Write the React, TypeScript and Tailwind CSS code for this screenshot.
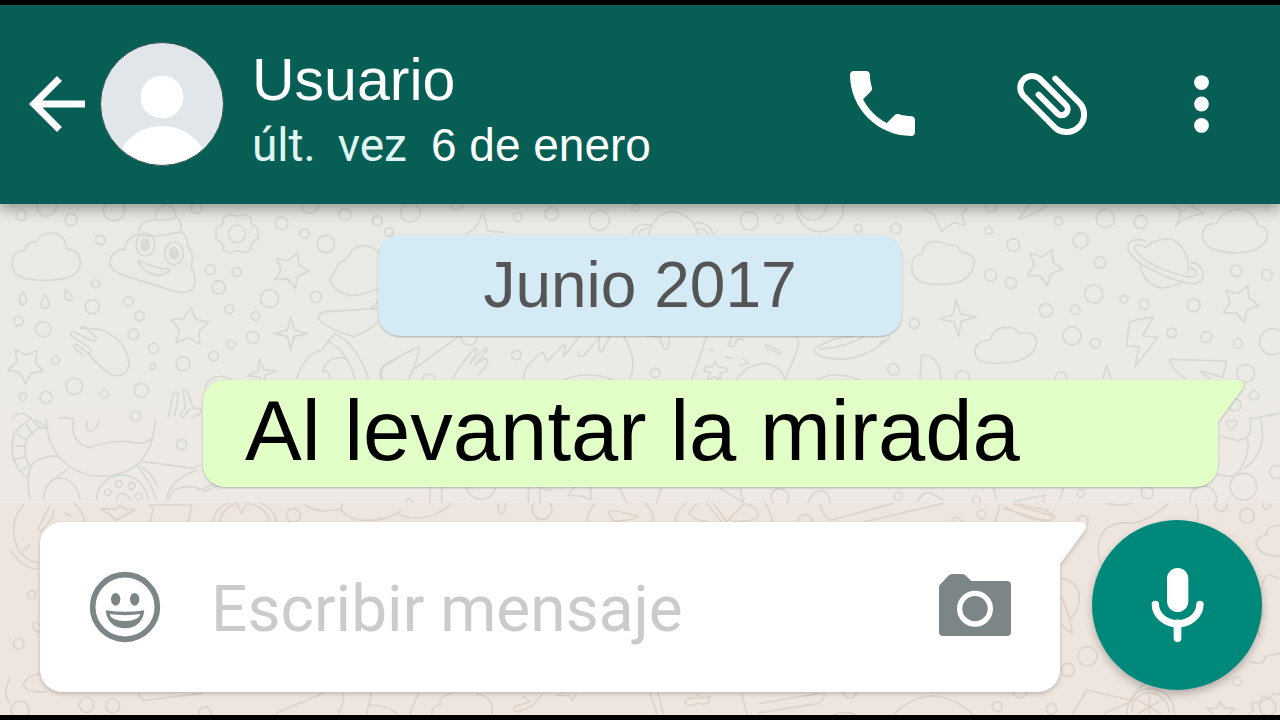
type Dot = [number, number, number];

function Dots({ items }: { items: Dot[] }) {
  return (
    <>
      {items.map(([x, y, r]) => (
        <circle key={`${x}-${y}`} cx={x} cy={y} r={r} />
      ))}
    </>
  );
}

function Star({ x, y, r, turn = 0, points = 5, inner = 0.52 }: { x: number; y: number; r: number; turn?: number; points?: number; inner?: number }) {
  const d = Array.from({ length: points * 2 }, (_, i) => {
    const a = (Math.PI * i) / points - Math.PI / 2 + (turn * Math.PI) / 180;
    const q = i % 2 ? r * inner : r;
    return `${i ? "L" : "M"}${(x + q * Math.cos(a)).toFixed(1)} ${(y + q * Math.sin(a)).toFixed(1)}`;
  }).join("");
  return <path d={`${d}Z`} />;
}

function Wallpaper() {
  return (
    <svg
      className="absolute inset-0 h-full w-full"
      viewBox="0 204 1280 511"
      preserveAspectRatio="xMidYMin slice"
      fill="none"
      strokeWidth="5"
      strokeLinecap="round"
      strokeLinejoin="round"
      aria-hidden="true"
    >
      <defs>
        <linearGradient id="paper" x1="0" y1="0" x2="0" y2="1">
          <stop offset="0" stopColor="#e9eae5" />
          <stop offset="0.45" stopColor="#ebeae5" />
          <stop offset="1" stopColor="#eee9e5" />
        </linearGradient>
        <clipPath id="upper">
          <rect x="0" y="204" width="1280" height="299" />
        </clipPath>
        <clipPath id="lower">
          <rect x="0" y="503" width="1280" height="212" />
        </clipPath>
      </defs>
      <rect x="0" y="204" width="1280" height="300" fill="url(#paper)" />
      <rect x="0" y="503" width="1280" height="212" fill="#eee5de" />
      <g clipPath="url(#upper)" stroke="#d8d8d3">
        <g transform="translate(0 200) scale(0.33333)">
          <path d="M36 195Q34 155 75 150Q80 125 108 125Q125 98 160 99Q195 102 200 146Q240 150 241 185Q240 225 195 235Q130 247 75 235Q38 225 36 195Z" />
          <path d="M375 148Q378 110 415 105Q415 62 465 60Q465 25 500 12Q525 25 530 52Q550 65 542 95Q565 105 562 138Q585 160 573 203Q590 225 582 262Q565 285 525 274L370 226Q325 210 330 180Q340 148 375 148Z" />
          <path d="M415 105Q460 115 542 95M465 60Q500 65 530 52M415 180Q460 205 508 208Q505 225 475 226Q425 220 415 180Z" />
          <ellipse cx="436" cy="134" rx="28" ry="34" />
          <ellipse cx="436" cy="134" rx="12" ry="17" fill="#dbdbd6" />
          <ellipse cx="522" cy="160" rx="28" ry="34" />
          <ellipse cx="522" cy="160" rx="12" ry="17" fill="#dbdbd6" />
          <path d="M690 42Q710 54 733 42L752 54Q748 76 774 82V118Q750 122 754 148L735 160Q712 145 690 160L668 150Q672 126 648 118V84Q674 78 668 54Z" />
          <circle cx="711" cy="101" r="26" />
          <Star x={872} y={210} r={55} turn={22} />
          <Star x={568} y={382} r={60} turn={4} />
          <Star x={78} y={495} r={56} turn={38} />
          <Star x={872} y={400} r={50} points={4} inner={0.28} />
          <Star x={785} y={520} r={45} turn={-10} points={4} inner={0.28} />
          <path d="M68 275Q48 310 68 314Q90 308 68 275ZM134 284Q112 322 135 326Q160 318 134 284ZM196 268Q190 300 208 302Q230 295 196 268Z" />
          <path d="M242 385L300 388Q375 415 387 485Q390 525 345 528Q315 520 262 458M242 385Q245 375 258 383L288 412Q292 425 275 423L222 395Q205 392 215 408L270 445Q278 460 262 458L232 434Q218 432 224 445L250 465" />
          <path d="M1134 155Q1090 120 1055 152Q1040 185 1018 188Q1005 218 992 235Q990 270 1050 287Q1095 285 1134 265M1134 325L980 335Q950 340 957 360Q990 390 1060 410Q1105 395 1134 365M1134 305L1115 325M1005 400L965 450Q915 460 890 535M985 425Q1040 450 1065 535M1005 402Q1070 430 1105 535M1035 475Q980 465 968 515Q985 505 990 535M1200 470L1150 500Q1140 510 1148 540" />
          <path d="M505 650L520 580Q530 570 535 585L525 645M548 572Q556 565 562 575L580 625Q610 620 602 640L575 655M550 580L556 625Q530 650 550 652L570 625M615 570Q620 530 665 528Q700 535 705 560" />
          <path d="M38 655Q60 625 93 655Q70 670 45 695Q25 745 50 800Q65 825 84 832M93 655L122 685L138 682M78 672L98 702M52 700L82 724M35 738H75M38 780L78 770M60 815L88 795M122 685Q75 700 75 750Q75 780 90 795M108 660L135 680M180 655Q200 650 220 658" />
          <path d="M138 660Q145 790 265 825Q350 840 410 795Q460 750 466 660M220 660Q210 730 270 743Q350 715 400 728Q435 735 460 712M262 665Q255 692 275 693Q290 690 296 662" />
          <path d="M90 900Q75 820 100 788Q140 765 170 768M130 900Q135 835 182 834Q230 840 240 900M170 830L200 810M410 795Q450 840 470 900M430 785L580 805L600 795M425 800Q450 815 475 860M500 895Q510 840 590 810M595 870L650 850M610 875L660 855M290 900Q290 840 360 825Q430 825 445 900M348 900Q365 860 392 900M605 870Q570 850 520 870L505 900" />
          <Dots items={[[64,46,16],[140,20,29],[213,59,18],[342,30,32],[301,120,14],[589,24,16],[845,70,19],[914,100,14],[930,15,25],[1035,44,18],[978,132,26],[1133,62,14],[1167,96,13],[631,209,15],[710,216,13],[656,262,20],[809,296,27],[948,291,17],[688,328,13],[767,348,13],[758,412,18],[693,433,13],[641,468,14],[549,491,21],[461,445,15],[458,499,9],[400,403,16],[419,348,14],[386,304,14],[287,251,12],[277,321,21],[55,363,14],[130,388,23],[167,481,12],[223,559,25],[313,581,12],[138,592,18],[69,590,11],[424,571,21],[406,648,15],[545,734,15],[356,852,10],[395,858,10],[323,877,10],[416,889,10]]} />
        </g>
        <g transform="translate(370 200) scale(0.33333)">
          <path d="M285 102Q325 90 335 40Q345 40 352 92L405 98M835 104Q850 40 910 34Q970 45 985 104M845 76Q800 65 785 104M835 85Q812 85 805 104M975 70Q1010 60 1033 104M985 85Q1005 85 1015 104" />
          <path d="M270 406L128 510L115 540M145 440L50 490Q20 510 35 540M145 440Q150 460 128 510M250 535Q260 510 310 450Q325 435 318 460L300 490L345 445Q360 440 345 460L315 495L345 475Q360 475 345 500L325 525M460 535Q465 490 520 455L530 485L580 435Q590 430 580 470L630 408M625 455Q620 475 645 465L690 408Q680 450 695 455L720 408M760 408Q805 480 780 535M580 540Q650 510 730 540M830 408L870 410L880 445Q895 460 898 410" />
          <path d="M1010 410L965 540M1280 410Q1292 425 1280 455L1245 540M1100 540Q1130 490 1190 490Q1235 500 1245 540M1018 448L1030 454M1065 470L1085 474M1120 475L1135 490L1110 495M1085 410L1075 438L1090 440L1105 415L1120 420M1190 435L1230 452Q1240 465 1225 460L1190 445Q1180 435 1190 435Z" />
          <path d="M1035 485L1045 500L1070 505V515L1050 520L1052 540L1035 530L1012 540L1022 518L1002 512L1005 500H1028ZM1330 448Q1390 408 1450 410M1350 448Q1430 440 1480 410M1330 448Q1335 475 1420 478Q1500 470 1560 410M1340 540Q1390 510 1470 540" />
          <Dots items={[[22,62,15],[121,37,29],[260,12,18],[443,51,13],[545,42,20],[688,61,30],[796,24,10],[1138,63,27],[1225,56,13],[1465,85,12],[1350,25,70],[1328,18,42],[56,96,12],[298,410,25],[439,465,14],[856,519,14],[176,542,20]]} />
        </g>
        <g transform="translate(880 200) scale(0.33333)">
          <path d="M95 205Q95 165 125 162Q130 125 165 124Q190 125 205 136Q235 130 243 157Q285 160 283 190Q275 235 230 248Q170 260 130 248Q95 235 95 205ZM285 458Q280 425 330 420Q340 382 385 382Q410 385 418 402Q465 390 470 425Q468 465 415 482Q360 495 310 486Q285 478 285 458ZM968 105Q970 70 1010 70Q1030 30 1080 27Q1125 35 1132 75Q1165 80 1163 110Q1150 150 1085 158Q1010 160 982 138Q968 125 968 105Z" />
          <path d="M133 27L163 45L185 94L220 68L255 75L245 45L262 22M415 58L450 15M415 58Q460 45 500 18M880 18L905 35L885 83Q905 50 972 40L935 18" />
          <path d="M795 142Q835 110 880 120Q930 150 925 218M780 195Q795 260 850 264Q885 260 908 244M795 122Q745 110 743 145Q755 190 880 238Q965 270 970 225Q965 190 935 188M795 142Q765 125 763 145Q785 190 890 222Q945 240 950 220Q945 205 930 202" />
          <path d="M748 365L820 350L788 408L833 412L765 500L777 440L740 438ZM870 478L1040 483L1028 532M868 480Q875 505 915 536M962 513L1028 532M962 513L990 536M1110 657L1200 640M1110 657Q1115 700 1100 715Q1115 750 1080 810L1060 830L1015 825M1142 660Q1165 750 1095 805M1020 708L1075 722L1100 712M120 535L125 465Q180 465 182 535M668 535L680 497L692 535M10 420L0 430M1040 675Q1035 655 1055 665Q1072 655 1072 670L1055 690Z" />
          <path d="M110 905Q130 875 150 878L190 900M340 865L350 900M550 865L540 900M400 905L495 885L490 905" />
          <Star x={492} y={200} r={57} turn={26} />
          <Star x={1080} y={310} r={58} turn={24} />
          <Star x={232} y={354} r={55} turn={-4} points={4} inner={0.28} />
          <Dots items={[[48,86,16],[333,22,15],[326,92,11],[400,135,19],[602,122,23],[536,63,12],[676,56,27],[782,66,20],[660,187,17],[332,225,18],[393,249,17],[641,282,27],[732,298,12],[793,313,15],[941,316,19],[1069,212,17],[1161,225,16],[586,329,14],[498,331,20],[576,407,27],[646,430,15],[875,399,14],[979,411,16],[1074,430,14],[1178,425,39],[1097,520,27],[1122,586,14],[1065,615,18],[1188,816,20],[1090,860,40],[970,898,40],[802,878,18],[603,880,11],[54,889,12],[289,900,12],[103,370,15],[40,508,17],[247,533,21],[543,533,17]]} />
        </g>
        <g transform="translate(400 480) scale(0.33333)">
          <path d="M90 20V68M125 20V68M15 68Q25 45 40 68M385 20V68M420 20V68M505 45L525 20M505 45L550 50L575 60L570 20M660 25Q670 50 680 68M785 25L770 68M960 25L1030 68L1020 25M1120 68Q1100 35 1140 25Q1180 40 1160 72M430 20Q430 35 455 30M200 20Q205 55 245 58Q280 55 285 25M1225 68Q1240 30 1265 32Q1290 40 1290 68" />
        </g>
      </g>
      <g clipPath="url(#lower)" stroke="#ddd3cb">
        <g transform="translate(0 480) scale(0.33333)">
          <path d="M70 75Q30 120 45 185Q65 240 115 248M35 215Q65 265 115 268M148 80L115 145L122 155L160 110V88M225 70Q250 100 255 125M300 85L350 88Q360 70 370 85L405 90L375 105L350 120L330 105ZM450 75L460 85L450 125M575 75L565 125M450 75H575M640 125Q645 80 690 68M660 125Q665 85 710 70L725 100L740 70Q800 80 808 125M780 70Q825 85 828 125M70 210L88 195M195 100L215 110M915 75Q960 105 1025 85Q1030 110 1080 120Q1150 125 1200 95M1030 70Q1020 80 1025 95" />
          <path d="M118 435Q95 415 100 440Q102 455 118 455M118 580Q75 590 70 615Q80 640 140 635M30 595Q5 640 30 670M415 640L430 662L605 640M970 640L830 698M1030 640Q1035 670 1015 700M1115 640L1100 700M1105 675Q1160 675 1190 700" />
          <Dots items={[[880,106,21],[95,344,12],[56,491,16],[260,675,22],[338,678,21],[60,690,27],[615,700,19]]} />
        </g>
        <g transform="translate(400 480) scale(0.33333)">
          <path d="M0 105Q80 135 155 70M295 70V95Q305 110 312 95L318 70M560 125Q565 90 585 70M735 70Q760 90 760 125M625 95Q630 85 715 110Q710 118 640 125ZM825 125Q830 90 860 70M895 70Q865 90 870 105Q885 120 925 125M920 70L965 125M940 70L980 125L1035 70M1000 125Q1080 125 1075 100Q1065 80 1040 72M1095 70Q1110 90 1118 125" />
          <path d="M55 640L30 700M95 700Q95 680 120 675Q115 645 155 642M230 642Q285 650 275 700M370 650L390 665L345 680Q335 695 355 695L400 675L425 645M470 645L510 648L518 662L528 645M750 640L770 700M775 640L790 700M890 645Q900 660 930 650Q930 675 905 672Q890 665 885 675Q860 680 855 665Q860 650 890 655M1025 640L1040 700" />
          <circle cx="426" cy="88" r="30" />
        </g>
        <g transform="translate(760 470) scale(0.33333)">
          <path d="M180 100Q190 145 215 150L400 100M315 155L550 100M0 700L180 670M0 728L175 700Q195 690 192 670M400 735Q450 680 520 678Q590 685 640 735M220 735Q250 720 290 735" />
          <Dots items={[[135,155,22],[665,133,13],[590,156,14],[968,153,16],[270,664,20],[780,664,20]]} />
        </g>
        <g transform="translate(880 490) scale(0.33333)">
          <path d="M345 95L360 45M375 50Q450 95 515 90Q530 75 495 60L415 42M370 55L500 95M400 42L525 80M680 40Q720 50 755 40M865 40Q820 85 760 100Q665 90 655 165Q655 200 665 225M945 40Q960 65 950 95M1005 40Q1000 60 1025 65Q1045 55 1040 40M1200 105Q1155 110 1160 135Q1125 140 1130 165Q1135 195 1200 200M545 265Q610 280 595 345Q585 380 570 385M545 320Q580 410 575 430L545 405M1200 265L1165 255Q1140 270 1145 325Q1125 340 1150 370Q1125 420 1140 440M1110 515Q1155 530 1155 500L1200 490M620 600L580 670M620 600L760 632L675 670M760 632Q765 590 800 580M740 670Q745 600 810 595Q880 600 883 670M755 665Q760 610 810 608Q860 615 868 665M808 615V670M775 630L840 670M845 630L775 670M1000 670L980 655H1010L1020 635L1035 655H1065L1050 670M1200 615L1180 610L1170 625L1150 618L1140 635L1115 640L1120 660L1110 670" />
          <Dots items={[[622,499,29],[564,540,20],[352,650,15],[514,657,16],[1071,574,13],[1101,77,22],[1160,45,12],[1163,652,25]]} />
        </g>
      </g>
    </svg>
  );
}

function BubbleTail({ className }: { className: string }) {
  return (
    <svg className={`absolute top-0 left-full -ml-px h-11 w-7 ${className}`} viewBox="0 0 28 44" aria-hidden="true">
      <path d="M0 0H22Q29 1 26 8L1 42V44H0Z" fill="currentColor" />
    </svg>
  );
}

function Header() {
  return (
    <header className="relative z-10 flex h-[199px] items-center bg-[#075e54] pr-[71px] pb-0.5 pl-[29px] text-white shadow-[0_4px_14px_rgba(0,0,0,0.4)]">
      <button type="button" aria-label="Atrás" className="mr-[15px] shrink-0">
        <svg className="h-14 w-14" viewBox="4 4 16 16" fill="currentColor">
          <path d="M20 11H7.83l5.59-5.59L12 4l-8 8 8 8 1.41-1.41L7.83 13H20v-2z" />
        </svg>
      </button>
      <svg className="h-[124px] w-[124px] shrink-0" viewBox="0 0 124 124" role="img" aria-label="Foto de perfil">
        <defs>
          <clipPath id="face">
            <circle cx="62" cy="62" r="61.5" />
          </clipPath>
        </defs>
        <circle cx="62" cy="62" r="61.5" fill="#e0e6e9" />
        <g clipPath="url(#face)" fill="#fff">
          <circle cx="62" cy="55" r="21.5" />
          <path d="M20 108Q36 84 62 84Q88 84 104 108V124H20Z" />
        </g>
        <circle cx="62" cy="62" r="61.5" fill="none" stroke="#33514f" strokeWidth="1" />
      </svg>
      <div className="ml-7 flex-1 pt-[18px] font-['Liberation_Sans',sans-serif] leading-[65px] whitespace-nowrap">
        <h1 className="text-[59px]">Usuario</h1>
        <p className="flex gap-6 text-[46px]">
          <span className="flex gap-[22px] font-[Roboto,sans-serif] text-[#e0f5f2]">
            <span>últ.</span>
            <span>vez</span>
          </span>
          <span>6 de enero</span>
        </p>
      </div>
      <div className="flex shrink-0 items-center">
        <button type="button" aria-label="Llamar">
          <svg className="h-[65px] w-[65px]" viewBox="3 3 18 18" fill="currentColor">
            <path d="M6.62 10.79c1.44 2.83 3.76 5.14 6.59 6.59l2.2-2.2c.27-.27.67-.36 1.02-.24 1.12.37 2.33.57 3.57.57.55 0 1 .45 1 1V20c0 .55-.45 1-1 1-9.39 0-17-7.61-17-17 0-.55.45-1 1-1h3.5c.55 0 1 .45 1 1 0 1.25.2 2.45.57 3.57.11.35.03.74-.25 1.02l-2.2 2.2z" />
          </svg>
        </button>
        <button type="button" aria-label="Adjuntar" className="ml-[100px]">
          <svg className="h-[68px] w-[75px]" viewBox="555 210 225 204" fill="none" stroke="currentColor" strokeWidth="18" strokeLinecap="round">
            <path d="M676 236L751 311A52.7 52.7 0 0 1 677 385L578 285A35.7 35.7 0 0 1 628 235L708 315A18 18 0 0 1 682 340L626 284" />
          </svg>
        </button>
        <button type="button" aria-label="Más opciones" className="ml-[104px]">
          <svg className="h-[58px] w-[15px]" viewBox="0 0 15 58" fill="currentColor">
            <circle cx="7.5" cy="7.6" r="7.4" />
            <circle cx="7.5" cy="29" r="7.4" />
            <circle cx="7.5" cy="50.4" r="7.4" />
          </svg>
        </button>
      </div>
    </header>
  );
}

function Composer() {
  return (
    <form className="relative flex h-[212px] items-center gap-8 pr-[18px] pb-1 pl-10" onSubmit={(e) => e.preventDefault()}>
      <div className="relative flex h-[170px] min-w-0 flex-1 items-center rounded-[22px] rounded-tr-none bg-white pr-[49px] pl-[49px] drop-shadow-[0_2px_2px_rgba(0,0,0,0.2)]">
        <BubbleTail className="text-white" />
        <button type="button" aria-label="Emoji" className="shrink-0 text-[#7c8588]">
          <svg className="h-[72px] w-[72px]" viewBox="268 274 216 216">
            <circle cx="376" cy="382" r="97" fill="none" stroke="currentColor" strokeWidth="17" />
            <ellipse cx="348" cy="359" rx="14" ry="19" fill="currentColor" />
            <ellipse cx="405" cy="359" rx="14" ry="19" fill="currentColor" />
            <path d="M318 392Q376 401 434 392C430 430 405 446 376 446C347 446 322 430 318 392Z" fill="currentColor" />
            <path d="M330 403Q376 410 422 403Q418 423 376 424Q334 423 330 403Z" fill="#fff" />
          </svg>
        </button>
        <input
          type="text"
          aria-label="Escribir mensaje"
          placeholder="Escribir mensaje"
          className="ml-[50px] h-[90px] min-w-0 flex-1 pt-1.5 font-[Roboto,sans-serif] text-[64px] text-[#333] outline-none placeholder:text-[#cbcbcb]"
        />
        <button type="button" aria-label="Cámara" className="mb-1 shrink-0 text-[#7c8588]">
          <svg className="h-[62px] w-[72px]" viewBox="177 252 216 186">
            <path d="M177 292Q177 287 181 283L205 257Q210 252 217 252H246Q253 252 258 257L274 273H380Q393 273 393 286V425Q393 438 380 438H190Q177 438 177 425Z" fill="currentColor" />
            <circle cx="285" cy="356" r="46" fill="none" stroke="#fff" strokeWidth="16" />
          </svg>
        </button>
      </div>
      <button
        type="button"
        aria-label="Grabar audio"
        className="mb-1 flex h-[170px] w-[170px] shrink-0 items-center justify-center rounded-full bg-[#00897b] text-white shadow-[0_4px_8px_rgba(0,0,0,0.25)]"
      >
        <svg className="h-[76px] w-[53px]" viewBox="811 231 159 228" fill="none" stroke="currentColor">
          <rect x="859" y="234" width="64" height="132" rx="32" fill="currentColor" stroke="none" />
          <path d="M824 343A67 58 0 0 0 958 343" strokeWidth="22" strokeLinecap="round" />
          <path d="M890.5 400V445" strokeWidth="23" strokeLinecap="round" />
        </svg>
      </button>
    </form>
  );
}

export default function App() {
  return (
    <div className="flex min-h-screen flex-col border-y-[5px] border-black bg-[#eee5de] font-['Liberation_Sans',sans-serif]">
      <Header />
      <div className="relative flex flex-1 flex-col">
        <Wallpaper />
        <main className="relative flex flex-1 flex-col gap-11 pt-[31px] pb-4">
          <div className="self-center rounded-[22px] bg-[#d4eaf5] px-[105px] text-[64px] leading-[101px] text-[#555] shadow-[0_1px_2px_rgba(0,0,0,0.25)]">
            Junio 2017
          </div>
          <div className="relative mr-[62px] ml-[203px] rounded-[22px] rounded-tr-none bg-[#e1ffc7] pb-1.5 pl-[42px] text-[85px] leading-[101px] text-black drop-shadow-[0_1px_1px_rgba(0,0,0,0.25)]">
            <BubbleTail className="text-[#e1ffc7]" />
            Al levantar la mirada
          </div>
        </main>
        <Composer />
      </div>
    </div>
  );
}
